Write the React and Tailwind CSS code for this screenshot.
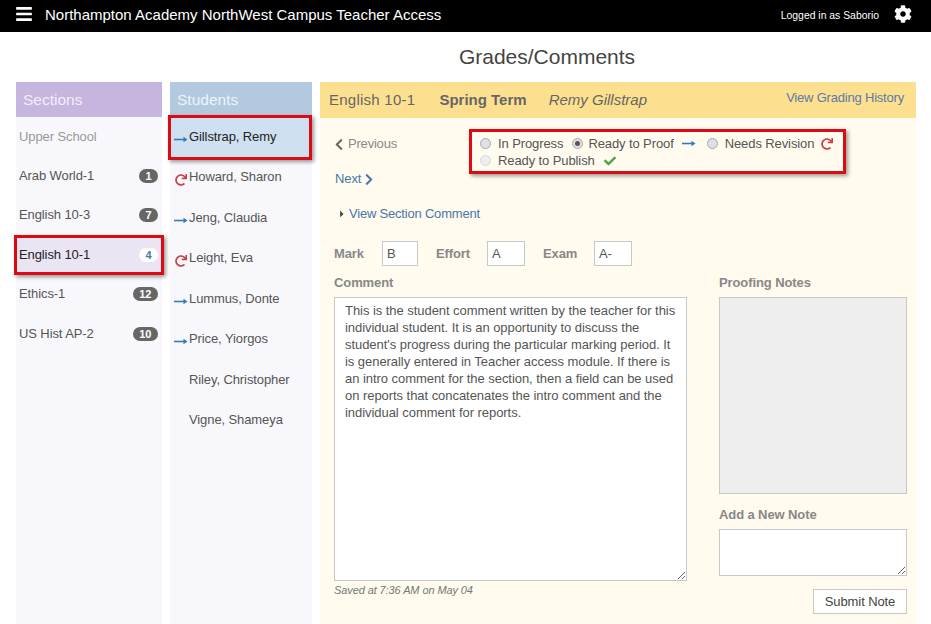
import { FaBars, FaCog, FaChevronLeft, FaChevronRight, FaRedo, FaCheck, FaCaretRight } from "react-icons/fa";

const sections = [
  { name: "Arab World-1", count: 1 },
  { name: "English 10-3", count: 7 },
  { name: "English 10-1", count: 4, active: true },
  { name: "Ethics-1", count: 12 },
  { name: "US Hist AP-2", count: 10 },
];

const students = [
  { name: "Gillstrap, Remy", status: "proof", active: true },
  { name: "Howard, Sharon", status: "revise" },
  { name: "Jeng, Claudia", status: "proof" },
  { name: "Leight, Eva", status: "revise" },
  { name: "Lummus, Donte", status: "proof" },
  { name: "Price, Yiorgos", status: "proof" },
  { name: "Riley, Christopher" },
  { name: "Vigne, Shameya" },
];

const comment =
  "This is the student comment written by the teacher for this individual student. It is an opportunity to discuss the student's progress during the particular marking period. It is generally entered in Teacher access module. If there is an intro comment for the section, then a field can be used on reports that concatenates the intro comment and the individual comment for reports.";

function Arrow() {
  return (
    <svg width="14" height="7" viewBox="0 0 14 7" className="shrink-0">
      <path d="M0 3.5h10" stroke="#337ab7" strokeWidth="1.6" />
      <path d="M9.5 0.8 13.5 3.5 9.5 6.2z" fill="#337ab7" />
    </svg>
  );
}

function Radio({ checked, faded }) {
  return (
    <span
      className={`flex h-[11px] w-[11px] shrink-0 items-center justify-center rounded-full border ${
        faded ? "border-[#d8d8d8] bg-[#eeeeee]" : "border-[#a9a9a9] bg-[#dfdfe6]"
      }`}
    >
      {checked && <span className="h-[5px] w-[5px] rounded-full bg-[#555]" />}
    </span>
  );
}

function Highlight({ className }) {
  return (
    <span
      className={`pointer-events-none absolute border-[3px] border-[#dc0a12] shadow-[2px_2px_4px_rgba(0,0,0,0.4)] ${className}`}
    />
  );
}

function SmallField({ label, value, labelClass, inputClass }) {
  return (
    <>
      <span className={`font-bold text-[#888] ${labelClass}`}>{label}</span>
      <input
        defaultValue={value}
        className={`h-[25px] border border-[#c8c8c8] bg-white px-[4px] text-[#555] outline-none ${inputClass}`}
      />
    </>
  );
}

export default function App() {
  return (
    <div className="h-screen w-screen overflow-hidden bg-white font-['Liberation_Sans',Arial,sans-serif] text-[13px] leading-5 tracking-[-0.1px] text-[#555]">
      <header className="flex h-8 items-center bg-black pl-[15px] pr-[19px] tracking-normal text-white">
        <FaBars className="mb-[5px] text-[18px]" />
        <span className="mb-[3px] ml-[12px] text-[15px]">Northampton Academy NorthWest Campus Teacher Access</span>
        <span className="ml-auto text-[10.4px]">Logged in as Saborio</span>
        <FaCog className="mb-[5px] ml-[15px] text-[18px]" />
      </header>

      <h1 className="ml-[163px] flex h-[50px] items-center justify-center text-[21px] tracking-normal text-[#444]">
        Grades/Comments
      </h1>

      <div className="flex h-[542px] pl-4">
        <aside className="w-[146px] bg-[#f8f8fc]">
          <div className="flex h-[35px] items-center bg-[#c5b5df] px-[7px] text-[15.5px] tracking-normal text-[#f3eef9]">Sections</div>
          <div className="flex h-[39px] items-center px-[3px] text-[#999]">Upper School</div>
          {sections.map((s) => (
            <div
              key={s.name}
              className={`relative flex h-[39.5px] items-center justify-between pl-[3px] pr-1 ${
                s.active ? "bg-[#ebe4f3] text-[#222]" : ""
              }`}
            >
              {s.name}
              <span
                className={`rounded-full px-[6.5px] py-px text-[11px] leading-[12px] font-bold tracking-normal ${
                  s.active ? "bg-white text-[#4a76a8]" : "bg-[#666] text-white"
                }`}
              >
                {s.count}
              </span>
              {s.active && <Highlight className="-inset-x-[2px] inset-y-0" />}
            </div>
          ))}
        </aside>

        <aside className="ml-2 w-[142px] bg-[#f8f8fc]">
          <div className="flex h-[35px] items-center bg-[#b3c9e0] px-[7px] text-[15.5px] tracking-normal text-[#eef3f9]">Students</div>
          {students.map((s) => (
            <div
              key={s.name}
              className={`relative flex h-[40.5px] items-center ${s.active ? "bg-[#cfe0f0] text-[#222]" : ""}`}
            >
              <span className="flex w-[19px] items-center justify-center pl-[2px] pt-[4px]">
                {s.status === "proof" && <Arrow />}
                {s.status === "revise" && <FaRedo className="text-[12px] text-[#c9424a]" />}
              </span>
              <span className="mb-[1px]">{s.name}</span>
              {s.active && <Highlight className="-left-[2px] right-0 -top-[2px] -bottom-[2px]" />}
            </div>
          ))}
        </aside>

        <main className="ml-2 w-[596px] bg-[#fffbef]">
          <div className="flex h-[36px] items-center bg-[#fde08f] pl-[9px] pr-3 text-[15px] text-[#666]">
            <span className="tracking-[0.25px]">English 10-1</span>
            <span className="ml-6 font-bold tracking-normal">Spring Term</span>
            <span className="ml-[22px] italic tracking-normal">Remy Gillstrap</span>
            <a className="mb-[4px] ml-auto text-[13px] tracking-[-0.2px] text-[#5b7ba5]">View Grading History</a>
          </div>

          <div className="pl-[14px] pr-[9px]">
            <div className="mt-[11px] flex">
              <div className="w-[135px] pt-[5px]">
                <div className="flex items-center gap-[5px] pl-px tracking-[-0.2px] text-[#888]">
                  <FaChevronLeft className="w-[8px] text-[13px] text-[#666]" /> Previous
                </div>
                <div className="mt-[15px] flex items-center gap-[4px] pl-px text-[#4a76a8]">
                  Next <FaChevronRight className="w-[8px] text-[13px]" />
                </div>
              </div>
              <div className="h-[45px] w-[377px] whitespace-nowrap border-[3px] border-[#dc0a12] pl-[8px] pt-[3px] leading-[17px] shadow-[2px_2px_4px_rgba(0,0,0,0.4)]">
                <div className="flex items-center">
                  <Radio />
                  <span className="ml-[7px]">In Progress</span>
                  <span className="ml-[9px]"><Radio checked /></span>
                  <span className="ml-[5px]">Ready to Proof</span>
                  <span className="ml-[8px]"><Arrow /></span>
                  <span className="ml-[11px]"><Radio /></span>
                  <span className="ml-[7px]">Needs Revision</span>
                  <FaRedo className="ml-[7px] text-[12px] text-[#c9424a]" />
                </div>
                <div className="flex items-center">
                  <Radio faded />
                  <span className="ml-[7px]">Ready to Publish</span>
                  <FaCheck className="ml-[9px] text-[12px] text-[#4fa34f]" />
                </div>
              </div>
            </div>

            <div className="mt-[15px] flex items-center tracking-[-0.2px] text-[#4a76a8]">
              <FaCaretRight className="ml-[3px] mr-[2px] text-[10px] text-[#444]" />
              View Section Comment
            </div>

            <div className="mt-[17px] flex items-center">
              <SmallField label="Mark" value="B" labelClass="w-[48px]" inputClass="w-[36px]" />
              <SmallField label="Effort" value="A" labelClass="ml-[18px] w-[51px]" inputClass="w-[38px]" />
              <SmallField label="Exam" value="A-" labelClass="ml-[18px] w-[51px]" inputClass="w-[38px]" />
            </div>

            <div className="mt-[7px] flex">
              <div className="w-[353px]">
                <div className="font-bold text-[#888]">Comment</div>
                <textarea
                  defaultValue={comment}
                  className="mt-[4px] block h-[284px] w-[353px] border border-[#c8c8c8] bg-white px-[10px] py-[4px] text-[13px] leading-[17px] tracking-[-0.05px] text-[#555] outline-none"
                />
                <div className="-mt-[1px] text-[11px] italic text-[#777]">Saved at 7:36 AM on May 04</div>
              </div>
              <div className="ml-8 w-[188px]">
                <div className="font-bold text-[#888]">Proofing Notes</div>
                <div className="mt-[4px] h-[197px] border border-[#c8c8c8] bg-[#eeeeee]" />
                <div className="mt-[11px] font-bold text-[#888]">Add a New Note</div>
                <textarea className="mt-[4px] block h-[47px] w-[188px] border border-[#c8c8c8] bg-white outline-none" />
                <div className="mt-[13px] flex justify-end">
                  <button className="h-[25px] w-[94px] border border-[#c8c8c8] bg-white text-[#444]">Submit Note</button>
                </div>
              </div>
            </div>
          </div>
        </main>
      </div>
    </div>
  );
}
